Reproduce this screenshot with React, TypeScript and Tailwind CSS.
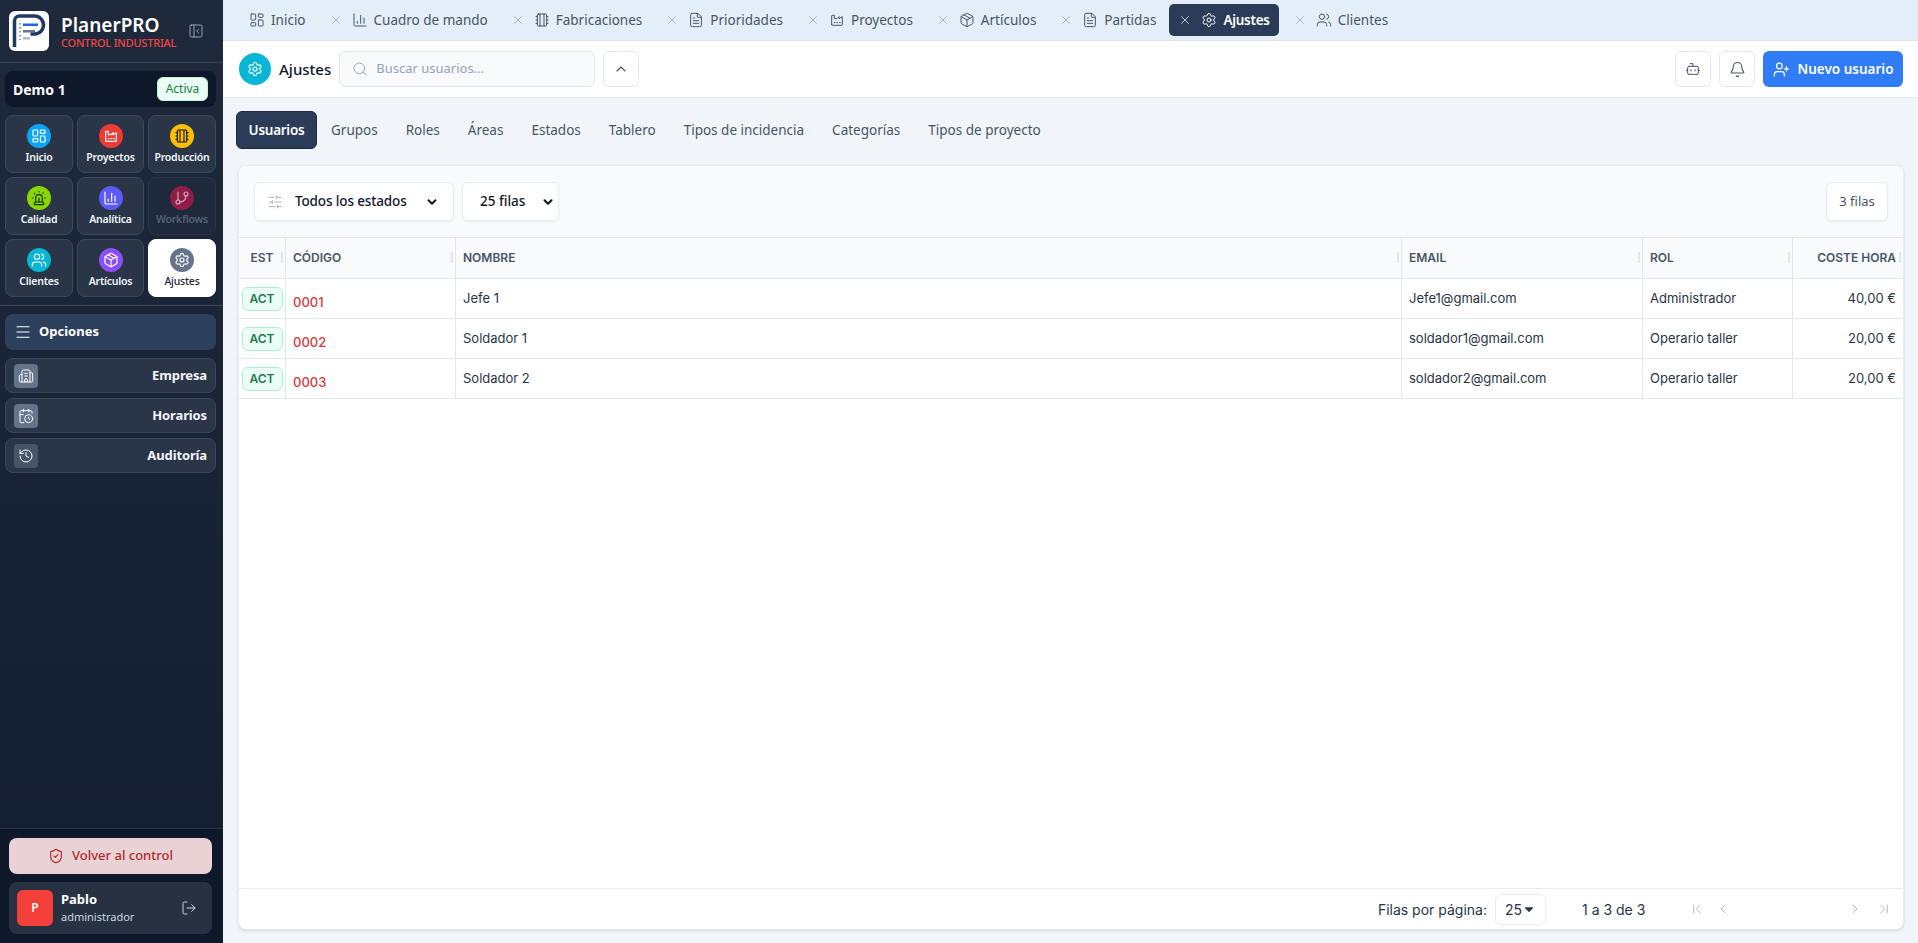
import React from 'react';
import {
  LayoutDashboard, ChartColumn, FileText, Package, Settings, Users, X, Search, ChevronUp, Bot, Bell, UserPlus,
  SlidersHorizontal, ChevronDown, Siren, GitBranch, PanelLeftClose, Menu, Building2, CalendarClock, History,
  ShieldCheck, LogOut, ChevronLeft, ChevronRight, ChevronFirst, ChevronLast,
} from 'lucide-react';
import { TbCaretDownFilled } from 'react-icons/tb';

type IconProps = { className?: string; strokeWidth?: number };
type Icon = React.ComponentType<IconProps>;

const sans = 'font-["Noto_Sans",sans-serif]';

function NotebookIcon({ className, strokeWidth = 2 }: IconProps) {
  return (
    <svg viewBox="0 0 24 24" fill="none" stroke="currentColor" strokeWidth={strokeWidth} strokeLinecap="round" strokeLinejoin="round" className={className}>
      <rect x="5" y="3" width="14" height="18" rx="1.500" />
      <path d="M9 3v18M15 3v18M3 7h2M3 12h2M3 17h2M19 7h2M19 12h2M19 17h2" />
    </svg>
  );
}

function FactoryIcon({ className, strokeWidth = 2 }: IconProps) {
  return (
    <svg viewBox="0 0 24 24" fill="none" stroke="currentColor" strokeWidth={strokeWidth} strokeLinecap="round" strokeLinejoin="round" className={className}>
      <path d="M4 19V6a1 1 0 0 1 1-1h3v5h4l3-3v3l5-3v12a1 1 0 0 1-1 1H5a1 1 0 0 1-1-1z" />
      <path d="M8 16h1M12 16h1M16 16h1" />
    </svg>
  );
}

const tabs: { label: string; icon: Icon; active?: boolean; closable?: boolean; ml: string }[] = [
  { label: 'Inicio', icon: LayoutDashboard, ml: 'ml-[26px]' },
  { label: 'Cuadro de mando', icon: ChartColumn, closable: true, ml: 'ml-[23px]' },
  { label: 'Fabricaciones', icon: NotebookIcon, closable: true, ml: 'ml-[23px]' },
  { label: 'Prioridades', icon: FileText, closable: true, ml: 'ml-[23px]' },
  { label: 'Proyectos', icon: FactoryIcon, closable: true, ml: 'ml-[23px]' },
  { label: 'Artículos', icon: Package, closable: true, ml: 'ml-[23px]' },
  { label: 'Partidas', icon: FileText, closable: true, ml: 'ml-[23px]' },
  { label: 'Ajustes', icon: Settings, closable: true, active: true, ml: 'ml-[13px]' },
  { label: 'Clientes', icon: Users, closable: true, ml: 'ml-[14px]' },
];

const modules: { label: string; icon: Icon; bg: string; fg?: string; off?: boolean; on?: boolean }[] = [
  { label: 'Inicio', icon: LayoutDashboard, bg: 'bg-[#0ba5f5]' },
  { label: 'Proyectos', icon: FactoryIcon, bg: 'bg-[#ef3b36]' },
  { label: 'Producción', icon: NotebookIcon, bg: 'bg-[#fbbf00]', fg: 'text-[#1c1917]' },
  { label: 'Calidad', icon: Siren, bg: 'bg-[#88d800]', fg: 'text-[#1a2e05]' },
  { label: 'Analítica', icon: ChartColumn, bg: 'bg-[#5b5bf6]' },
  { label: 'Workflows', icon: GitBranch, bg: 'bg-[#8f1d47]', fg: 'text-white/60', off: true },
  { label: 'Clientes', icon: Users, bg: 'bg-[#06b6d4]' },
  { label: 'Artículos', icon: Package, bg: 'bg-[#8b4ff6]' },
  { label: 'Ajustes', icon: Settings, bg: 'bg-[#64748b]', on: true },
];

const options: { label: string; icon: Icon; dim?: boolean }[] = [
  { label: 'Empresa', icon: Building2 },
  { label: 'Horarios', icon: CalendarClock },
  { label: 'Auditoría', icon: History, dim: true },
];

const subTabs = ['Grupos', 'Roles', 'Áreas', 'Estados', 'Tablero', 'Tipos de incidencia', 'Categorías', 'Tipos de proyecto'];

const rows = [
  { code: '0001', name: 'Jefe 1', email: 'Jefe1@gmail.com', role: 'Administrador', cost: '40,00 €' },
  { code: '0002', name: 'Soldador 1', email: 'soldador1@gmail.com', role: 'Operario taller', cost: '20,00 €' },
  { code: '0003', name: 'Soldador 2', email: 'soldador2@gmail.com', role: 'Operario taller', cost: '20,00 €' },
];

const cols = 'grid grid-cols-[47px_170px_946px_241px_150px_1fr]';

function Logo() {
  return (
    <div className="w-10 h-10 rounded-[6px] bg-white shrink-0">
      <svg viewBox="0 0 40 40" className="w-10 h-10">
        <path d="M5.500 36V10a5 5 0 0 1 5-5h15a8.500 8.500 0 0 1 0 18h-4" fill="none" stroke="#1e3a5f" strokeWidth="3.500" />
        <rect x="14" y="12.500" width="15" height="2.500" fill="#2563eb" />
        <rect x="14" y="19" width="12" height="2.500" fill="#64748b" />
        <rect x="14" y="26" width="7" height="2.500" fill="#b4bcc8" />
        <path d="M11 12v17" stroke="#1e3a5f" strokeWidth="1" strokeDasharray="1.500 2.500" />
      </svg>
    </div>
  );
}

function Sidebar() {
  return (
    <aside className={`w-[223px] shrink-0 h-full flex flex-col bg-gradient-to-b from-[#1e293b] to-[#141d30] ${sans}`}>
      <div className="h-[63px] shrink-0 flex items-center pl-[9px] pr-[19px] border-b border-[#3a4659]">
        <Logo />
        <div className="ml-[12px] flex-1 min-w-0">
          <div className="text-[19px] leading-[22px] font-semibold text-white">PlanerPRO</div>
          <div className="text-[11px] leading-[13px] font-medium tracking-[-0.02em] text-[#f04545] whitespace-nowrap">CONTROL INDUSTRIAL</div>
        </div>
        <PanelLeftClose className="w-4 h-4 text-[#94a3b8]" strokeWidth={1.5} />
      </div>

      <div className="pl-[5px] pr-[7px] pt-2">
        <div className="h-9 rounded-lg bg-[#0f172a] flex items-center justify-between px-2">
          <span className="text-[14px] font-bold text-white">Demo 1</span>
          <span className="w-[51px] h-[24px] rounded-md bg-[#ecfdf5] border border-[#bbf7d0] text-[12px] text-[#15803d] flex items-center justify-center">Activa</span>
        </div>

        <div className="grid grid-cols-[68px_67px_68px] gap-1 mt-2">
          {modules.map((m) => (
            <div
              key={m.label}
              className={`h-[58px] rounded-lg border flex flex-col items-center pt-2 ${
                m.on ? 'bg-white border-white' : m.off ? 'bg-[#1e293b] border-[#2a3547]' : 'bg-[#2a3548] border-[#3c485c]'
              }`}
            >
              <span className={`w-6 h-6 rounded-full flex items-center justify-center ${m.bg}`}>
                <m.icon className={`w-4 h-4 ${m.fg ?? 'text-white'}`} strokeWidth={1.75} />
              </span>
              <span className={`mt-[1px] text-[10.5px] leading-[16px] tracking-[-0.02em] whitespace-nowrap ${m.on ? 'font-medium text-[#1e293b]' : m.off ? 'font-semibold text-[#566174]' : 'font-semibold text-[#f1f5f9]'}`}>
                {m.label}
              </span>
            </div>
          ))}
        </div>
      </div>

      <div className="mt-2 border-t border-[#3a4659] pl-[5px] pr-[7px] pt-2 flex flex-col">
        <div className="h-9 rounded-lg bg-[#2c405c] flex items-center pl-[9px] gap-[7px] text-white">
          <Menu className="w-[18px] h-[18px]" strokeWidth={1.5} />
          <span className="text-[13px] font-bold">Opciones</span>
        </div>
        <div className="mt-2 flex flex-col gap-[5px]">
          {options.map((o) => (
            <div key={o.label} className="h-[35px] rounded-lg border border-[#3a4659] bg-[#2a3548] flex items-center justify-between px-2">
              <span className={`w-6 h-6 rounded flex items-center justify-center ${o.dim ? 'bg-[#475569]' : 'bg-[#64748b]'}`}>
                <o.icon className="w-4 h-4 text-white" strokeWidth={1.5} />
              </span>
              <span className="text-[13px] font-bold tracking-[-0.01em] text-[#f1f5f9]">{o.label}</span>
            </div>
          ))}
        </div>
      </div>

      <div className="mt-auto h-[115px] shrink-0 border-t border-[#273244] bg-[#0f172a] pl-[9px] pr-[11px] pt-[9px]">
        <div className="h-9 rounded-lg bg-[#e8d2d4] flex items-center justify-center gap-2 text-[#b02a2a]">
          <ShieldCheck className="w-4 h-4" strokeWidth={1.75} />
          <span className="text-[13px] font-medium">Volver al control</span>
        </div>
        <div className="mt-2 h-[52px] rounded-lg bg-[#283142] flex items-center pl-2 pr-[15px]">
          <span className="w-9 h-9 rounded-md bg-[#f43f3a] text-white text-[12px] font-semibold flex items-center justify-center">P</span>
          <div className="ml-2 flex-1">
            <div className="text-[13px] leading-[17px] font-bold text-white">Pablo</div>
            <div className="text-[11px] leading-[17px] text-[#cbd5e1]">administrador</div>
          </div>
          <LogOut className="w-4 h-4 text-[#cbd5e1]" strokeWidth={1.5} />
        </div>
      </div>
    </aside>
  );
}

function TopTabs() {
  return (
    <div className={`h-[41px] shrink-0 flex items-center bg-[#e4eef8] border-b border-[#dfe5ec] text-[13.5px] text-[#475569] ${sans}`}>
      {tabs.map((t) => (
        <div
          key={t.label}
          className={`${t.ml} flex items-center whitespace-nowrap ${
            t.active ? 'h-8 pl-[9px] pr-[9px] rounded-[5px] bg-[#2a3c58] text-white font-semibold tracking-[-0.02em]' : 'h-8'
          }`}
        >
          {t.closable && <X className={`w-[14px] h-[14px] mr-[9px] ${t.active ? 'text-white/80' : 'text-[#a3adba]'}`} strokeWidth={1.5} />}
          <t.icon className={`w-4 h-4 mr-[6px] ${t.active ? 'text-white' : ''}`} strokeWidth={1.5} />
          <span>{t.label}</span>
        </div>
      ))}
    </div>
  );
}

function PageHeader() {
  return (
    <div className={`h-[57px] shrink-0 bg-white border-b border-[#e2e8f0] flex items-center pl-4 pr-[15px] ${sans}`}>
      <span className="w-8 h-8 rounded-full bg-[#06b6d4] flex items-center justify-center text-white">
        <Settings className="w-4 h-4" strokeWidth={1.75} />
      </span>
      <span className="ml-2 text-[15px] font-medium text-[#0f172a]">Ajustes</span>
      <div className="ml-2 w-[256px] h-9 rounded-md border border-[#e2e8f0] bg-[#f8fafc] flex items-center pl-[12px] text-[13px] text-[#94a3b8]">
        <Search className="w-4 h-4 text-[#94a3b8]" strokeWidth={1.5} />
        <span className="ml-2">Buscar usuarios...</span>
      </div>
      <button className="ml-2 w-9 h-9 rounded-md border border-[#e2e8f0] bg-white flex items-center justify-center text-[#475569]">
        <ChevronUp className="w-4 h-4" strokeWidth={1.75} />
      </button>
      <button className="ml-auto w-9 h-9 rounded-md border border-[#e2e8f0] bg-white flex items-center justify-center text-[#475569]">
        <Bot className="w-4 h-4" strokeWidth={1.5} />
      </button>
      <button className="ml-2 w-9 h-9 rounded-md border border-[#e2e8f0] bg-white flex items-center justify-center text-[#475569]">
        <Bell className="w-[17px] h-[17px]" strokeWidth={1.5} />
      </button>
      <button className="ml-2 w-[140px] h-9 rounded-md bg-[#2f7cf6] flex items-center justify-center gap-2 text-white text-[13.5px] font-semibold">
        <UserPlus className="w-[17px] h-[17px]" strokeWidth={1.75} />
        Nuevo usuario
      </button>
    </div>
  );
}

function SubTabs() {
  return (
    <div className={`h-[67px] shrink-0 flex items-start pt-[13px] pl-[13px] text-[13.5px] text-[#475569] ${sans}`}>
      <span className="h-[38px] w-[81px] rounded-md bg-[#2a3c58] border border-[#1e293b] text-white font-semibold tracking-[-0.02em] flex items-center justify-center">Usuarios</span>
      {subTabs.map((s) => (
        <span key={s} className="h-[38px] flex items-center px-[14px] whitespace-nowrap">{s}</span>
      ))}
    </div>
  );
}

function HeaderCell({ label, align = 'left', grip = true }: { label: string; align?: 'left' | 'right' | 'center'; grip?: boolean }) {
  const justify = align === 'right' ? 'justify-end' : align === 'center' ? 'justify-center' : '';
  return (
    <div className={`relative h-full flex items-center px-[7px] border-r border-[#e2e8f0] last:border-r-0 ${justify}`}>
      {label}
      {grip && <span className="absolute right-[2px] top-[14px] w-[2px] h-[11px] bg-[#e2e8f0]" />}
    </div>
  );
}

function UsersTable() {
  return (
    <div className="ml-[15px] mr-[14px] flex-1 mb-[13px] min-h-0 rounded-lg border border-[#e8edf3] bg-white flex flex-col overflow-hidden shadow-sm">
      <div className={`h-[71px] shrink-0 bg-[#f8fafc] flex items-center pl-[15px] pr-[15px] text-[13.5px] ${sans}`}>
        <div className="w-[200px] h-[39px] rounded-md border border-[#e8edf3] bg-white flex items-center pl-[12px] pr-[14px] text-[#0f172a] shadow-xs">
          <SlidersHorizontal className="w-4 h-4 text-[#94a3b8]" strokeWidth={1.25} />
          <span className="ml-[12px] font-medium flex-1 tracking-[-0.01em]">Todos los estados</span>
          <ChevronDown className="w-[14px] h-[14px] text-[#111827]" strokeWidth={3.5} />
        </div>
        <div className="ml-2 w-[97px] h-[39px] rounded-md border border-[#e8edf3] bg-white flex items-center pl-[17px] pr-[3px] text-[#0f172a] shadow-xs">
          <span className="font-medium flex-1">25 filas</span>
          <ChevronDown className="w-[14px] h-[14px] text-[#111827]" strokeWidth={3.5} />
        </div>
        <div className="ml-auto w-[62px] h-[39px] rounded-md border border-[#e8edf3] bg-white flex items-center justify-center text-[#475569] text-[13px] shadow-xs">3 filas</div>
      </div>

      <div className={`flex-1 min-h-0 font-["Inter",sans-serif] text-[13px] text-[#283548]`}>
        <div className={`${cols} h-[42px] bg-[#f8fafc] border-y border-[#e2e8f0] text-[12px] font-semibold text-[#475569]`}>
          <HeaderCell label="EST" align="center" />
          <HeaderCell label="CÓDIGO" />
          <HeaderCell label="NOMBRE" />
          <HeaderCell label="EMAIL" />
          <HeaderCell label="ROL" />
          <HeaderCell label="COSTE HORA" align="right" />
        </div>
        {rows.map((r) => (
          <div key={r.code} className={`${cols} h-[40px] border-b border-[#e2e8f0]`}>
            <div className="border-r border-[#e2e8f0] flex items-center justify-center">
              <span className="w-[41px] h-[24px] rounded-md bg-[#ecfdf5] border border-[#a7f3d0] text-[#1e7a53] text-[12px] font-semibold flex items-center justify-center">ACT</span>
            </div>
            <div className="border-r border-[#e2e8f0] flex items-center px-[7px] pt-[9px] text-[#d23c41] font-medium">{r.code}</div>
            <div className="border-r border-[#e2e8f0] flex items-center px-[7px]">{r.name}</div>
            <div className="border-r border-[#e2e8f0] flex items-center px-[7px]">{r.email}</div>
            <div className="border-r border-[#e2e8f0] flex items-center px-[7px]">{r.role}</div>
            <div className="flex items-center justify-end px-[7px]">{r.cost}</div>
          </div>
        ))}
      </div>

      <div className={`h-[41px] shrink-0 border-t border-[#e8edf3] flex items-center pr-[11px] font-["Inter",sans-serif] text-[14px] text-[#283548]`}>
        <span className="ml-auto">Filas por página:</span>
        <span className="ml-2 w-[51px] h-[31px] rounded-md border border-[#e8edf3] flex items-center pl-[9px]">
          25
          <TbCaretDownFilled className="w-[14px] h-[14px]" />
        </span>
        <span className="ml-[36px] w-[107px]">1 a 3 de 3</span>
        <ChevronFirst className="w-4 h-4 text-[#b8bcc2]" strokeWidth={1.5} />
        <ChevronLeft className="ml-[10px] w-4 h-4 text-[#b8bcc2]" strokeWidth={1.5} />
        <ChevronRight className="ml-[116px] w-4 h-4 text-[#b8bcc2]" strokeWidth={1.5} />
        <ChevronLast className="ml-[13px] w-4 h-4 text-[#b8bcc2]" strokeWidth={1.5} />
      </div>
    </div>
  );
}

export default function App() {
  return (
    <div className="flex w-full h-[943px] overflow-hidden bg-[#f1f5f9]">
      <Sidebar />
      <main className="flex-1 min-w-0 flex flex-col">
        <TopTabs />
        <PageHeader />
        <SubTabs />
        <UsersTable />
      </main>
    </div>
  );
}
